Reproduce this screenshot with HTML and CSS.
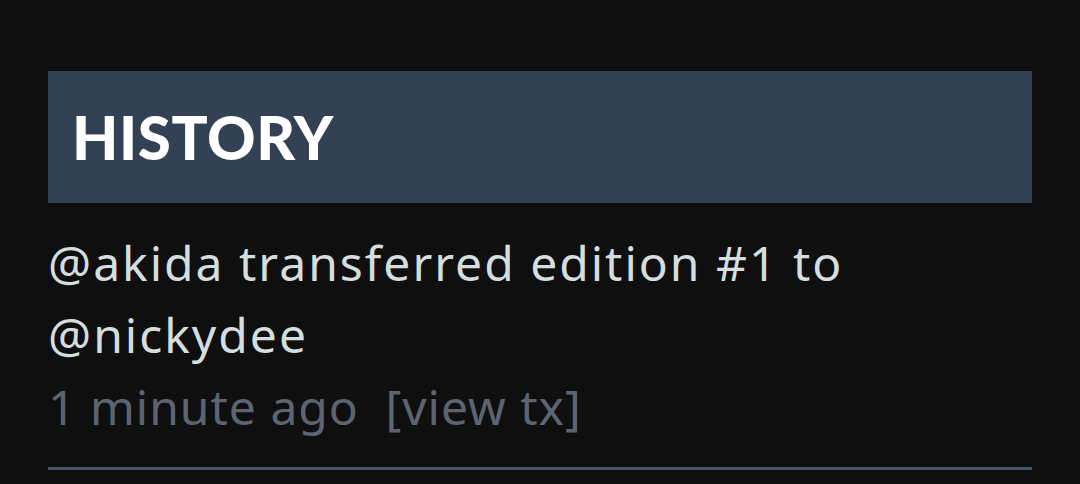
FILE: index.html
```html
<!DOCTYPE html>
<html lang="en">
<head>
  <meta charset="UTF-8">
  <meta name="viewport" content="width=device-width, initial-scale=1.0">
  <title>History</title>
  <link rel="stylesheet" href="styles.css">
</head>
<body>

  <div class="container">
    <section class="history">
      <h2 class="history-title">HISTORY</h2>

      <ul class="history-list">
        <li class="history-item">
          <p class="history-text">@akida transferred edition #1 to @nickydee</p>
          <div class="history-meta">
            <span class="history-time">1 minute ago</span>
            <a class="history-link" href="#">[view tx]</a>
          </div>
        </li>
      </ul>
    </section>
  </div>

</body>
</html>
```

FILE: styles.css
```css
html, body {
  margin: 0;
  background-color: #0f0f0f;
}

body {
  font-family: "Noto Sans", Roboto, sans-serif;
  color: #d4dede;
}

.container {
  padding: 71px 48px 0;
}

.history-title {
  margin: 0;
  padding: 24px;
  background-color: #334155;
  color: #ffffff;
  font-family: Lato, "Open Sans", sans-serif;
  font-weight: 900;
  font-size: 60px;
  line-height: 84px;
  letter-spacing: 0.6px;
}

.history-list {
  list-style: none;
  margin: 0;
  padding: 0;
}

.history-item {
  padding: 24px 0;
  border-bottom: 3px solid #475569;
}

.history-text {
  margin: 0;
  font-size: 48px;
  line-height: 72px;
  letter-spacing: 2px;
  max-width: 880px;
}

.history-meta {
  font-size: 48px;
  line-height: 72px;
  letter-spacing: 1px;
  color: #5c6472;
}

.history-link {
  margin-left: 13px;
  color: #5c6472;
  text-decoration: none;
}
```
